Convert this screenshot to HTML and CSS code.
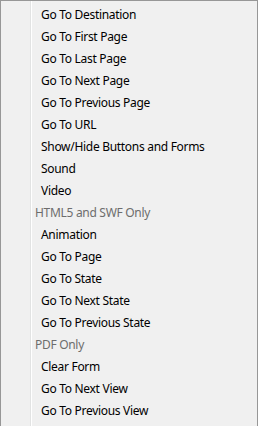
FILE: index.html
```html
<!DOCTYPE html>
<html>
<head>
  <meta charset="UTF-8">
  <title>Actions Menu</title>
  <link rel="stylesheet" href="styles.css">
</head>
<body>
  <div class="menu">
    <ul class="menu-list">
      <li class="menu-item">Go To Destination</li>
      <li class="menu-item">Go To First Page</li>
      <li class="menu-item">Go To Last Page</li>
      <li class="menu-item">Go To Next Page</li>
      <li class="menu-item">Go To Previous Page</li>
      <li class="menu-item">Go To URL</li>
      <li class="menu-item">Show/Hide Buttons and Forms</li>
      <li class="menu-item">Sound</li>
      <li class="menu-item">Video</li>
      <li class="menu-header">HTML5 and SWF Only</li>
      <li class="menu-item">Animation</li>
      <li class="menu-item">Go To Page</li>
      <li class="menu-item">Go To State</li>
      <li class="menu-item">Go To Next State</li>
      <li class="menu-item">Go To Previous State</li>
      <li class="menu-header">PDF Only</li>
      <li class="menu-item">Clear Form</li>
      <li class="menu-item">Go To Next View</li>
      <li class="menu-item">Go To Previous View</li>
    </ul>
  </div>
</body>
</html>
```

FILE: styles.css
```css
html, body {
  margin: 0;
  height: 100%;
}

body {
  font-family: "Noto Sans", sans-serif;
  font-size: 12px;
  letter-spacing: -0.3px;
  background-color: #f0f0f0;
}

.menu {
  box-sizing: border-box;
  height: 100%;
  border-top: 1px solid #979797;
  border-left: 1px solid #979797;
  border-right: 1px solid #979797;
  background: linear-gradient(to right,
      transparent 29px, #e2e3e3 29px, #e2e3e3 30px,
      #ffffff 30px, #ffffff 31px, transparent 31px),
    #f0f0f0;
  padding-top: 3px;
}

.menu-list {
  list-style: none;
  margin: 0;
  padding: 0;
}

.menu-item,
.menu-header {
  height: 22px;
  line-height: 22px;
  white-space: nowrap;
}

.menu-item {
  padding-left: 40px;
  color: #000;
}

.menu-header {
  padding-left: 34px;
  color: #6d6d6d;
}
```
